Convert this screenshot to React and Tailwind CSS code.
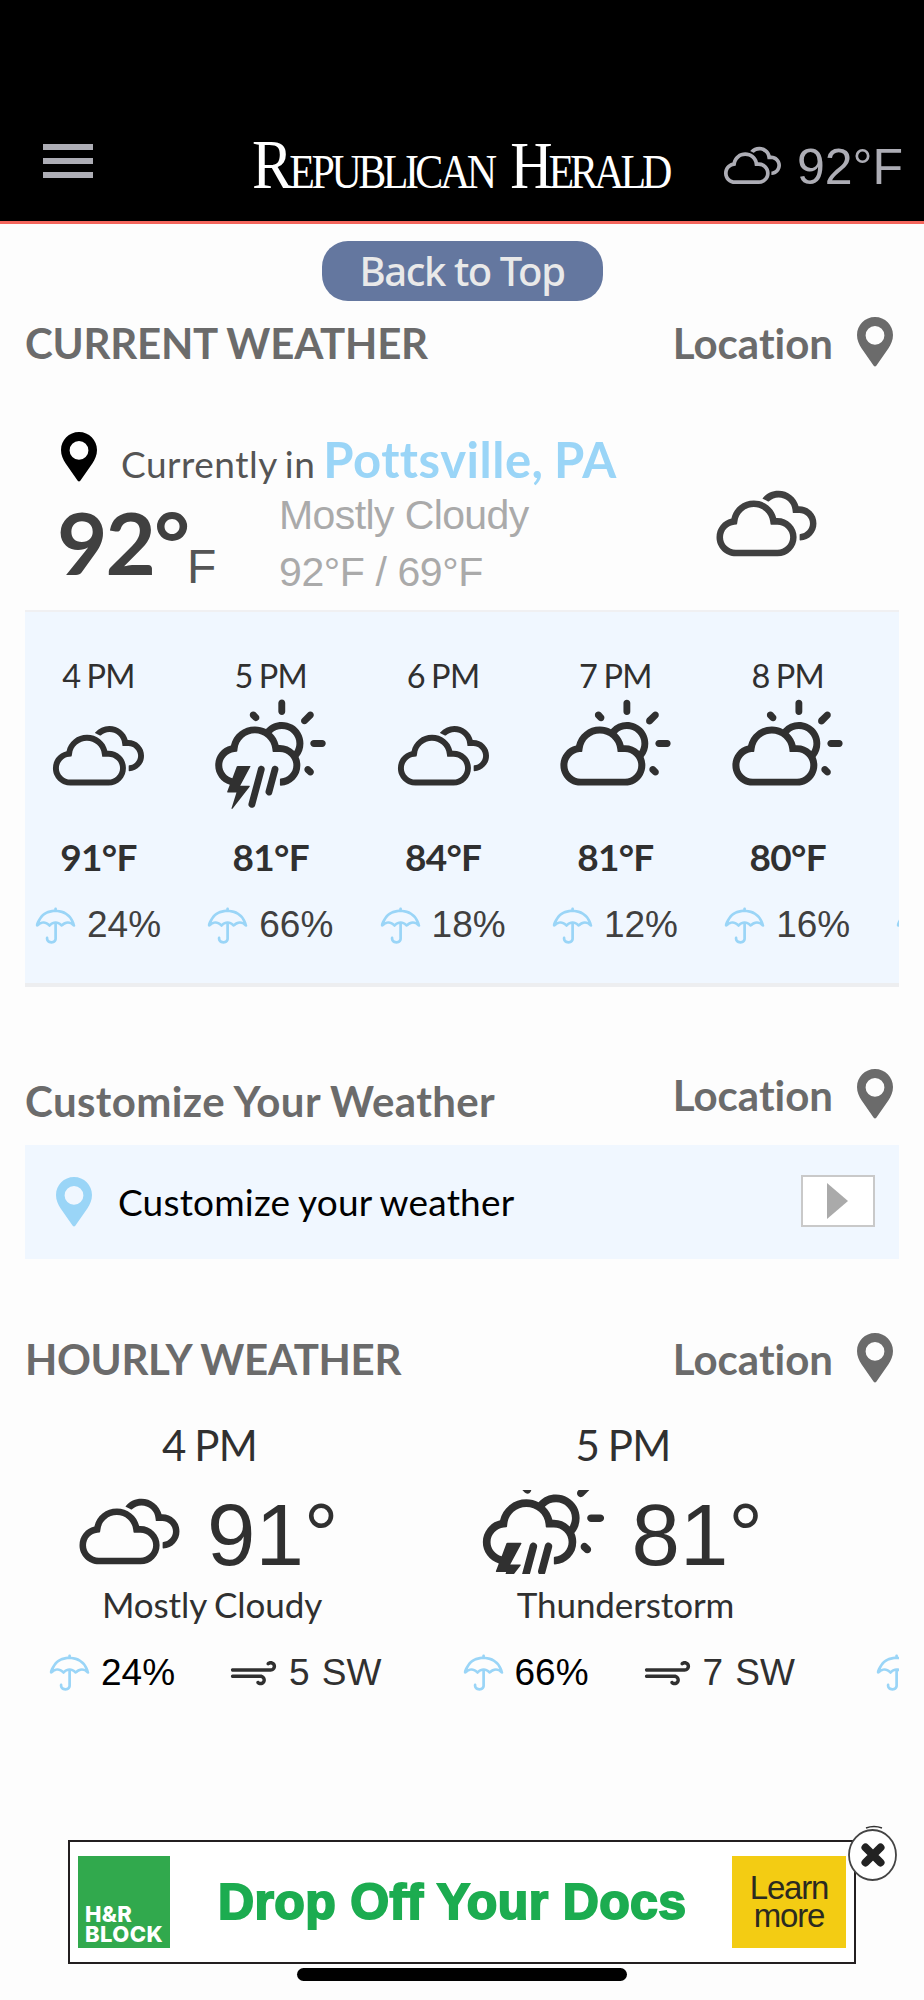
import React from "react";
import { WiCloudy, WiDayCloudy, WiDayThunderstorm, WiStrongWind, WiUmbrella } from "react-icons/wi";

const forecast = [
  { time: "4 PM", temp: "91°F", rain: "24%", Icon: WiCloudy },
  { time: "5 PM", temp: "81°F", rain: "66%", Icon: WiDayThunderstorm },
  { time: "6 PM", temp: "84°F", rain: "18%", Icon: WiCloudy },
  { time: "7 PM", temp: "81°F", rain: "12%", Icon: WiDayCloudy },
  { time: "8 PM", temp: "80°F", rain: "16%", Icon: WiDayCloudy },
  { time: "", temp: "", rain: "", Icon: WiDayCloudy },
];

const hourly = [
  { time: "4 PM", temp: "91°", text: "Mostly Cloudy", rain: "24%", wind: "5 SW", Icon: WiCloudy, gap: "ml-[10px]" },
  { time: "5 PM", temp: "81°", text: "Thunderstorm", rain: "66%", wind: "7 SW", Icon: WiDayThunderstorm, gap: "ml-[21px]" },
  { time: "", temp: "", text: "", rain: "", wind: "", Icon: null, gap: "" },
];

function Pin({ className = "" }) {
  return (
    <svg viewBox="0 0 36 50" className={`h-[50px] w-[36px] shrink-0 ${className}`} fill="currentColor">
      <path
        fillRule="evenodd"
        d="M18 0C8 0 0 8 0 18c0 5 2 9.500 4.500 13.300L16.700 48.800q1.300 1.500 2.600 0L31.500 31.300C34 27.500 36 23 36 18 36 8 28 0 18 0Zm0 9a9.400 9.400 0 1 1 0 18.800A9.400 9.400 0 0 1 18 9Z"
      />
    </svg>
  );
}

function SectionHeading({ title, titleClass }) {
  return (
    <div className="flex h-[50px] items-center justify-between pr-[31px] pl-[25px] text-[42px] leading-[50px] font-bold text-[#6b6b6b]">
      <h2 className={`whitespace-nowrap ${titleClass}`}>{title}</h2>
      <div className="flex items-center gap-[24px]">
        <span className="pt-[2px]">Location</span>
        <Pin />
      </div>
    </div>
  );
}

function Header() {
  return (
    <header className="flex h-[224px] border-b-[3px] border-[#f4665c] bg-black pt-[127px] pl-[43px] text-[#adadb5]">
      <div className="mt-[17px] flex w-[50px] flex-col gap-[8px]">
        <span className="h-[6px] bg-[#adadb5]" />
        <span className="h-[6px] bg-[#adadb5]" />
        <span className="h-[6px] bg-[#adadb5]" />
      </div>
      <h1 className="-mt-[4px] ml-[159px] w-[462px] origin-left scale-x-[0.875] font-['Liberation_Serif',serif] text-[48px] leading-[84px] tracking-[-4px] whitespace-nowrap text-white [word-spacing:11px]">
        <span className="text-[70px]">R</span>EPUBLICAN{" "}
        <span className="tracking-[-4.600px]">
          <span className="text-[67px]">H</span>ERALD
        </span>
      </h1>
      <WiCloudy className="mt-[1px] size-[77px] shrink-0" />
      <span className="ml-[6px] font-['Liberation_Sans',sans-serif] text-[50px] leading-[80px]">92°F</span>
    </header>
  );
}

function CurrentWeather() {
  return (
    <section className="h-[243px] pt-[65px] text-[#404040]">
      <div className="flex h-[50px] pl-[61px] leading-[54px] whitespace-nowrap">
        <Pin className="text-black" />
        <p className="ml-[24px] text-[37px] tracking-[0.500px] text-[#555] [word-spacing:-2px]">
          Currently in <span className="text-[49px] font-bold text-[#9ad5f7]">Pottsville, PA</span>
        </p>
      </div>
      <div className="flex pl-[57px]">
        <div className="flex w-[222px]">
          <span className="text-[87px] leading-[120px] font-bold tracking-[-2px]">92°</span>
          <span className="mt-[60px] -ml-[1px] font-['Liberation_Sans',sans-serif] text-[48px] leading-[49px] text-[#555]">F</span>
        </div>
        <div className="mt-[5px] w-[420px] font-['Liberation_Sans',sans-serif] text-[41px] leading-[57px] tracking-[-0.600px] text-[#aaa]">
          <p>Mostly Cloudy</p>
          <p className="tracking-[-0.400px]">92°F / 69°F</p>
        </div>
        <WiCloudy className="-mt-[24px] size-[135px] shrink-0" />
      </div>
    </section>
  );
}

function ForecastStrip() {
  return (
    <div className="mx-[25px] flex h-[377px] w-[874px] gap-[25.300px] overflow-hidden border-t-2 border-b-4 border-t-[#f0f0f2] border-b-[#edeef0] bg-[#f0f7ff] text-[#303030]">
      {forecast.map(({ time, temp, rain, Icon }, i) => (
        <div key={i} className="flex w-[147px] shrink-0 flex-col items-center whitespace-nowrap">
          <span className="mt-[48px] h-[32px] text-[32.500px] leading-[32px] tracking-[-0.700px] [word-spacing:-1.500px]">{time}</span>
          <Icon className="mt-[4px] size-[123px]" />
          <span className="mt-[18px] h-[40px] text-[37px] leading-[40px] font-bold tracking-[-0.700px]">{temp}</span>
          <div className="mt-[28px] flex h-[40px] w-full items-center pl-[2px]">
            <WiUmbrella className="size-[57px] shrink-0 text-[#9ad5f7]" />
            <span className="ml-[3px] font-['Liberation_Sans',sans-serif] text-[37px] leading-[40px] text-[#404040]">{rain}</span>
          </div>
        </div>
      ))}
    </div>
  );
}

function CustomizeBar() {
  return (
    <div className="mx-[25px] mt-[26px] flex h-[114px] items-center bg-[#f0f7ff] pr-[24px] pl-[31px]">
      <Pin className="text-[#9ad5f7]" />
      <span className="ml-[26px] text-[37px] tracking-[0.200px] text-black [word-spacing:-1px]">Customize your weather</span>
      <button className="-mt-[2px] ml-auto flex h-[52px] w-[74px] items-center border-2 border-[#c9c9c9] bg-white pl-[24px]">
        <svg viewBox="0 0 21 36" className="h-[36px] w-[21px] fill-[#aaa]">
          <path d="M0 0 21 18 0 36Z" />
        </svg>
      </button>
    </div>
  );
}

function HourlyWeather() {
  return (
    <div className="mx-[25px] flex gap-[47.500px] overflow-hidden pt-[37px] text-[#303030]">
      {hourly.map(({ time, temp, text, rain, wind, Icon, gap }, i) => (
        <div key={i} className="w-[366px] shrink-0 whitespace-nowrap">
          <p className="h-[50px] pl-[3px] text-center text-[42px] leading-[50px] tracking-[-0.700px] [word-spacing:-1.500px]">{time}</p>
          <div className="mt-[20px] flex h-[84px] overflow-hidden pl-[37px]">
            {Icon && <Icon className="-mt-[24px] size-[135px] shrink-0" />}
            <span className={`font-['Liberation_Sans',sans-serif] text-[87px] leading-[90px] ${gap}`}>{temp}</span>
          </div>
          <p className="mt-[10px] h-[40px] pl-[8px] text-center text-[35px] leading-[40px] tracking-[-0.100px] [word-spacing:-1px]">{text}</p>
          <div className="mt-[28px] flex h-[40px] items-center pl-[16px] font-['Liberation_Sans',sans-serif] text-[37px] leading-[42px]">
            <WiUmbrella className="size-[57px] shrink-0 text-[#9ad5f7]" />
            <span className="ml-[3px] w-[124px] pt-[1px] text-black">{rain}</span>
            {wind && <WiStrongWind className="size-[57px]" />}
            <span className="ml-[7px] pt-[1px] [word-spacing:2px]">{wind}</span>
          </div>
        </div>
      ))}
    </div>
  );
}

function AdBanner() {
  return (
    <div className="relative ml-[68px] flex h-[124px] w-[788px] items-center border-[2.500px] border-[#231f20] bg-white pl-[8px] font-['Liberation_Sans',sans-serif]">
      <div className="flex h-[92px] w-[92px] flex-col justify-end bg-[#31a94d] pb-[4px] pl-[7px] font-['Inter',sans-serif] text-[22px] leading-[20px] font-extrabold tracking-[0.400px] text-white">
        <span>H&amp;R</span>
        <span>BLOCK</span>
      </div>
      <p className="ml-[48px] w-[514px] text-[50px] leading-[60px] font-bold tracking-[0.350px] whitespace-nowrap text-[#1cac50] [-webkit-text-stroke:2px_#1cac50]">
        Drop Off Your Docs
      </p>
      <button className="flex h-[92px] w-[114px] flex-col items-center justify-center bg-[#f3cc13] text-[33px] leading-[28px] tracking-[-1.200px] text-[#2b2a20]">
        <span>Learn</span>
        <span>more</span>
      </button>
      <svg viewBox="0 0 52 58" className="absolute -top-[17px] left-[776px] h-[58px] w-[52px]" fill="none">
        <path d="M20 3q8-3 16 0" stroke="#333" strokeWidth="1.500" />
        <ellipse cx="26.500" cy="30" rx="23.500" ry="25" fill="#fff" stroke="#444" strokeWidth="1.800" />
        <path d="m19.500 22.500 15 15m0-15-15 15" stroke="#222" strokeWidth="8" strokeLinecap="round" />
      </svg>
    </div>
  );
}

export default function App() {
  return (
    <div className="flex h-[2000px] w-[924px] flex-col overflow-hidden bg-[#fdfdfd] font-['Lato',sans-serif] [font-variant-ligatures:none]">
      <Header />
      <button className="mx-auto mt-[17px] mb-[16px] h-[60px] w-[281px] shrink-0 rounded-[26px] bg-[#64779f] font-['Noto_Sans',sans-serif] text-[40px] leading-[60px] font-medium tracking-[-1.400px] text-[#e9e9e9]">
        Back to Top
      </button>
      <SectionHeading title="CURRENT WEATHER" titleClass="pt-[2px] tracking-[-0.250px]" />
      <CurrentWeather />
      <ForecastStrip />
      <div className="mt-[82px]">
        <SectionHeading title="Customize Your Weather" titleClass="pt-[14px] tracking-[0.400px] [word-spacing:-0.500px]" />
        <CustomizeBar />
      </div>
      <div className="mt-[74px] h-[507px]">
        <SectionHeading title="HOURLY WEATHER" titleClass="pt-[1px] tracking-[-0.350px]" />
        <HourlyWeather />
      </div>
      <AdBanner />
      <div className="mt-[4px] ml-[297px] h-[13px] w-[330px] rounded-full bg-black" />
    </div>
  );
}
